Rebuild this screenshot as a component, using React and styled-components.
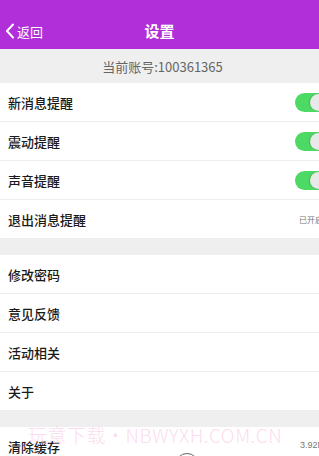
import React from "react";
import styled, { createGlobalStyle } from "styled-components";

const GlobalStyle = createGlobalStyle`
  html, body {
    margin: 0;
    padding: 0;
    background: #fff;
    overflow: hidden;
  }
  body {
    font-family: "Noto Sans CJK SC", "Noto Sans", sans-serif;
  }
`;

const Page = styled.div`
  position: relative;
  width: 319px;
  height: 456px;
  overflow: hidden;
  background: #fff;
`;

const Header = styled.div`
  height: 49px;
  background: #b12fd8;
  display: flex;
  align-items: flex-end;
  padding-bottom: 7px;
  box-sizing: border-box;
  position: relative;
  color: #fff;
`;

const Back = styled.div`
  display: flex;
  align-items: center;
  gap: 2px;
  padding-left: 5px;
  font-size: 13px;
  height: 22px;
  z-index: 1;
`;

const Title = styled.div`
  position: absolute;
  left: 0;
  right: 0;
  bottom: 7px;
  height: 22px;
  line-height: 22px;
  text-align: center;
  font-size: 15px;
  font-weight: 700;
`;

const Account = styled.div`
  height: 34px;
  background: #efefef;
  display: flex;
  align-items: center;
  justify-content: center;
  padding-left: 6px;
  font-size: 13px;
  color: #666;
`;

const Group = styled.div`
  background: #fff;
`;

const Gap = styled.div`
  height: 17px;
  background: #efefef;
`;

const Row = styled.div`
  height: 39px;
  box-sizing: border-box;
  display: flex;
  align-items: center;
  justify-content: space-between;
  padding-left: 8px;
  overflow: hidden;
  border-bottom: 1px solid #ededed;

  &:last-child {
    height: 38px;
    border-bottom: none;
  }
`;

const Label = styled.span`
  font-size: 13px;
  color: #1a1a1a;
  font-weight: 500;
`;

const Value = styled.span`
  font-family: ${(p) => (p.latin ? '"Liberation Sans", sans-serif' : '"Noto Sans CJK SC", sans-serif')};
  font-size: ${(p) => (p.latin ? "9px" : "8px")};
  color: #777;
  white-space: nowrap;
  margin-right: ${(p) => p.shift}px;
  margin-top: ${(p) => (p.latin ? "-3px" : "0")};
`;

const Switch = styled.div`
  position: relative;
  flex-shrink: 0;
  width: 34px;
  height: 19px;
  border-radius: 10px;
  background: #4cd964;
  margin-right: -10px;
`;

const Knob = styled.div`
  position: absolute;
  top: 1px;
  left: 15px;
  width: 17px;
  height: 17px;
  border-radius: 50%;
  background: #e9e9e9;
  box-shadow: -1px 0 1px rgba(0, 0, 0, 0.15);
`;

const Watermark = styled.div`
  position: absolute;
  left: 28px;
  top: 421px;
  font-size: 19px;
  font-weight: 300;
  letter-spacing: 0.5px;
  color: rgba(248, 190, 225, 0.55);
  white-space: nowrap;
  pointer-events: none;
`;

const Bubble = styled.div`
  position: absolute;
  left: 175px;
  top: 453px;
  width: 22px;
  height: 22px;
  border-radius: 50%;
  border: 1px solid #666;
`;

const Chevron = () => (
  <svg width="10" height="16" viewBox="0 0 10 16">
    <path d="M8 1.5 L2 8 L8 14.5" fill="none" stroke="#fff" strokeWidth="2" strokeLinecap="round" strokeLinejoin="round" />
  </svg>
);

const Toggle = () => (
  <Switch>
    <Knob />
  </Switch>
);

const groups = [
  [
    { label: "新消息提醒", toggle: true },
    { label: "震动提醒", toggle: true },
    { label: "声音提醒", toggle: true },
    { label: "退出消息提醒", value: "已开启", shift: -4 },
  ],
  [
    { label: "修改密码" },
    { label: "意见反馈" },
    { label: "活动相关" },
    { label: "关于" },
  ],
  [{ label: "清除缓存", value: "3.92M", latin: true, shift: -6 }],
];

export default function App() {
  return (
    <Page>
      <GlobalStyle />
      <Header>
        <Back>
          <Chevron />
          <span>返回</span>
        </Back>
        <Title>设置</Title>
      </Header>
      <Account>当前账号:100361365</Account>
      {groups.map((items, i) => (
        <React.Fragment key={i}>
          {i > 0 && <Gap />}
          <Group>
            {items.map((item) => (
              <Row key={item.label}>
                <Label>{item.label}</Label>
                {item.toggle && <Toggle />}
                {item.value && (
                  <Value latin={item.latin} shift={item.shift}>
                    {item.value}
                  </Value>
                )}
              </Row>
            ))}
          </Group>
        </React.Fragment>
      ))}
      <Watermark>玩意下载・NBWYXH.COM.CN</Watermark>
      <Bubble />
    </Page>
  );
}
